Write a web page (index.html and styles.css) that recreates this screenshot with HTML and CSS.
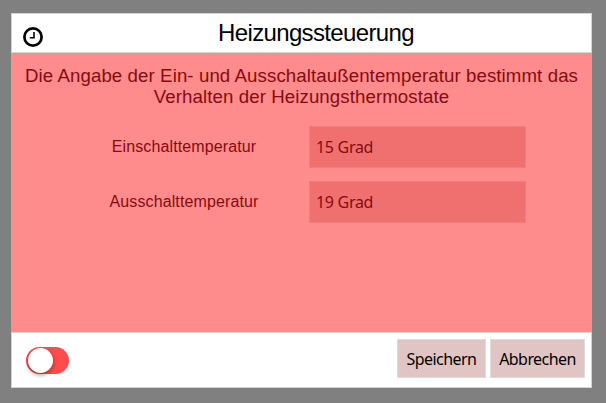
FILE: index.html
```html
<!DOCTYPE html>
<html lang="de">
<head>
<meta charset="utf-8">
<title>Heizungssteuerung</title>
<link rel="stylesheet" href="styles.css">
</head>
<body>
<form class="dialog">
  <header class="dialog-header">
    <svg class="clock" viewBox="0 0 20 20" fill="none" stroke="#000">
      <circle cx="10" cy="10" r="8.6" stroke-width="2.7"/>
      <path d="M11 5v5.7H6.8" stroke-width="1.6"/>
    </svg>
    <h1 class="title">Heizungssteuerung</h1>
  </header>
  <main class="dialog-body">
    <p class="description">Die Angabe der Ein- und Ausschaltaußentemperatur bestimmt das<br>Verhalten der Heizungsthermostate</p>
    <div class="fields">
      <label class="label" for="on">Einschalttemperatur</label>
      <input class="field" id="on" value="15 Grad">
      <label class="label" for="off">Ausschalttemperatur</label>
      <input class="field" id="off" value="19 Grad">
    </div>
  </main>
  <footer class="dialog-footer">
    <span class="switch"><span class="knob"></span></span>
    <div class="actions">
      <button class="button save" type="button">Speichern</button>
      <button class="button cancel" type="button">Abbrechen</button>
    </div>
  </footer>
</form>
</body>
</html>
```
FILE: styles.css
```css
* { box-sizing: border-box; }
body {
  margin: 0;
  height: 403px;
  padding: 13px 14px 15px 11px;
  background: #808080;
  font-family: "Liberation Sans", Arial, sans-serif;
  overflow: hidden;
}
.dialog {
  display: flex;
  flex-direction: column;
  width: 581px;
  height: 375px;
  margin: 0;
}
.dialog-header {
  display: grid;
  grid-template-columns: 20px 1fr;
  align-items: center;
  height: 40px;
  padding: 0 2px 0 11px;
  background: #fff;
  border: 1px solid #d3d3d3;
}
.clock { width: 20px; height: 20px; margin-top: 8px; }
.title {
  margin: 0;
  font-size: 24px;
  font-weight: 400;
  line-height: 38px;
  letter-spacing: -0.65px;
  text-align: center;
}
.dialog-body { flex: 1; background: #ff8c8c; color: #850b10; }
.description {
  margin: 12px 0 19px;
  font-size: 18.67px;
  line-height: 21px;
  letter-spacing: 0.09px;
  text-align: center;
  white-space: nowrap;
}
.fields {
  display: grid;
  grid-template-columns: 217px 217px;
  grid-auto-rows: 42px;
  gap: 13px 17px;
  align-items: center;
  padding-left: 64px;
}
.label { font-size: 16px; letter-spacing: 0.12px; text-align: center; padding-left: 1px; }
.field {
  width: 217px;
  height: 42px;
  padding: 0 6px;
  border: 1px solid #f27b7b;
  background: #f07070;
  color: #850b10;
  font: 16px "Noto Sans", sans-serif;
  letter-spacing: -0.3px;
}
.dialog-footer {
  display: flex;
  justify-content: space-between;
  height: 56px;
  padding: 6px 6px 0 14px;
  background: #fff;
  border: 1px solid #d3d3d3;
}
.switch {
  width: 43px;
  height: 27px;
  margin-top: 8px;
  padding: 1px 2px;
  border-radius: 14px;
  background: #ff4b4b;
}
.knob {
  display: block;
  width: 25px;
  height: 25px;
  border-radius: 50%;
  background: #fff;
  box-shadow: 0 2px 4px rgba(0, 0, 0, 0.4);
}
.actions { display: flex; gap: 4px; }
.button {
  height: 39px;
  padding: 0;
  border: 1px solid #dcdcdc;
  background: #e1c5c5;
  color: #000;
  font: 16px "Noto Sans", sans-serif;
  letter-spacing: -0.55px;
}
.save { width: 89px; }
.cancel { width: 95px; }
```
